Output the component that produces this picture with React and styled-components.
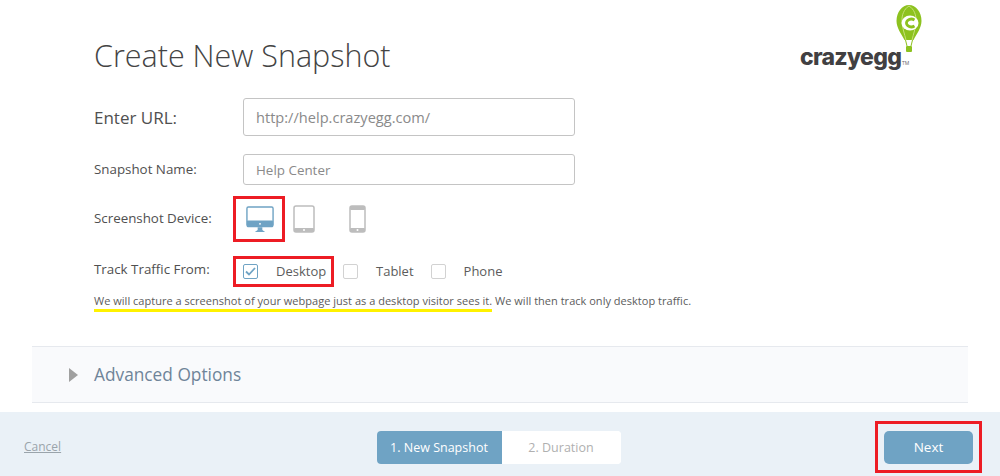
import React from "react";
import styled, { createGlobalStyle } from "styled-components";

const Global = createGlobalStyle`
  html, body { margin: 0; padding: 0; background: #fff; }
  body { font-family: "Open Sans", "Liberation Sans", sans-serif; color: #555; }
`;
const Page = styled.div`
  width: 1000px; height: 476px; overflow: hidden; display: flex; flex-direction: column;
`;
const Main = styled.div`
  height: 346px; padding: 0 78px 0 94px; box-sizing: border-box; display: flex; flex-direction: column;
`;
const Header = styled.header`
  height: 98px; display: flex; justify-content: space-between; align-items: flex-start;
`;
const Title = styled.h1`
  margin: 35px 0 0; font-size: 30.5px; line-height: 40px; font-weight: 300; color: #444;
`;
const Logo = styled.div`
  width: 122px; position: relative; height: 70px; margin-top: 2px; flex: none;
`;
const LogoWord = styled.span`
  position: absolute; left: 0; top: 41px; font-family: "Inter", "Liberation Sans", sans-serif; font-weight: 800; font-size: 23px; line-height: 28px; letter-spacing: -0.7px; color: #414042;
`;
const LogoMark = styled.span`
  position: absolute; left: 102px; top: 58px; font-size: 5px; line-height: 6px; color: #666;
`;
const Balloon = styled.svg`
  position: absolute; left: 95px; top: 2px;
`;
const Row = styled.div`
  display: flex; align-items: center; height: ${p => p.$h}px; margin-bottom: ${p => p.$mb || 0}px;
`;
const Label = styled.label`
  width: 149px; flex: none; font-size: ${p => p.$big ? 17 : 13.35}px; color: #505050; margin-bottom: ${p => p.$up || 0}px;
`;
const Input = styled.input`
  width: 332px; height: 100%; box-sizing: border-box; border: 1px solid #c4c4c4; border-radius: 3px; padding: 0 12px;
  font-family: inherit; font-size: ${p => p.$big ? 14.6 : 13.4}px; color: #8a8a8a; background: #fff; outline: none;
`;
const RedBox = styled.div`
  box-sizing: border-box; border: 3px solid #ed1c24; display: flex; align-items: center;
`;
const DeviceRow = styled.div`
  display: flex; align-items: center; margin-left: -10px;
`;
const DeviceBox = styled(RedBox)`
  width: 52px; height: 46px; justify-content: center; padding-left: 2px;
`;
const DeviceIcon = styled.svg`
  display: block; margin-left: ${p => p.$ml}px;
`;
const TrackBox = styled(RedBox)`
  width: 101px; height: 31px; padding-left: 7px; margin-left: -10px;
`;
const Check = styled.span`
  width: 15px; height: 15px; flex: none; box-sizing: border-box; border: 1.5px solid ${p => p.$on ? "#6fa3c4" : "#d2d2d2"}; border-radius: 2px; background: #fff;
  display: flex; align-items: center; justify-content: center;
`;
const CheckText = styled.span`
  font-size: 13px; color: #5c5c5c; margin-left: ${p => p.$ml}px; margin-bottom: 2px;
`;
const Plain = styled.div`
  display: flex; align-items: center; margin-left: ${p => p.$ml}px;
`;
const Note = styled.p`
  margin: 5px 0 0; font-size: 11px; line-height: 17px; color: #5c5c5c; white-space: nowrap; letter-spacing: 0.02px;
`;
const Marked = styled.span`
  display: inline-block; line-height: 16px; border-bottom: 3px solid #fff200;
`;
const Advanced = styled.div`
  margin: 0 32px; height: 57px; box-sizing: border-box; background: #f9fafc; border-top: 1px solid #e6e9ee; border-bottom: 1px solid #e6e9ee;
  display: flex; align-items: center; padding: 0 0 0 37px;
`;
const Arrow = styled.span`
  width: 0; height: 0; border-left: 9px solid #a0a0a0; border-top: 7px solid transparent; border-bottom: 7px solid transparent;
`;
const AdvText = styled.span`
  margin: 0 0 1px 16px; font-size: 17.3px; color: #6f8499;
`;
const Footer = styled.footer`
  margin-top: 9px; height: 64px; background: #eaf1f7; display: grid; grid-template-columns: 1fr auto 1fr; align-items: center;
  padding: 0 18px 0 24px; box-sizing: border-box;
`;
const Cancel = styled.a`
  font-size: 12px; color: #9aa4ab; text-decoration: underline; margin-top: 5px; justify-self: start;
`;
const Steps = styled.div`
  display: flex; height: 33px; width: 244px; border-radius: 4px; overflow: hidden; background: #fff; margin: 7px 9px 0 0;
`;
const Step = styled.div`
  flex: ${p => p.$w}px 0 0; display: flex; align-items: center; justify-content: center; font-size: 12.5px;
  background: ${p => p.$on ? "#6fa3c4" : "#fff"}; color: ${p => p.$on ? "#fff" : "#b0b0b0"};
`;
const NextBox = styled(RedBox)`
  width: 107px; height: 52px; justify-content: center; margin-top: 6px; justify-self: end;
`;
const Next = styled.button`
  width: 89px; height: 33px; border: 0; border-radius: 5px; background: #6fa3c4; color: #fff; font-family: inherit; font-size: 13.5px; font-weight: 400;
`;

export default function App() {
  return (
    <Page>
      <Global />
      <Main>
        <Header>
          <Title>Create New Snapshot</Title>
          <Logo>
            <LogoWord>crazyegg</LogoWord>
            <LogoMark>TM</LogoMark>
            <Balloon width="28" height="50" viewBox="0 0 28 50">
              <path d="M14 1C7 1 1.500 8 1.500 17c0 7 5 13 8 19h9c3-6 8-12 8-19C26.500 8 21 1 14 1z" fill="#8dc21f" />
              <path d="M14 2C9 5 6.500 11 7 18c.4 6 2.500 12 4 18M14 2c5 3 7.500 9 7 16-.4 6-2.500 12-4 18" stroke="#c5e07a" strokeWidth="1" fill="none" />
              <ellipse cx="15" cy="19" rx="8.500" ry="7.500" fill="#fff" />
              <path d="M19.500 16a5 3.800 0 1 0 0 6" stroke="#8dc21f" strokeWidth="2.800" fill="none" />
              <path d="M10.500 36l1.500 6M17.500 36l-1.500 6" stroke="#8dc21f" strokeWidth="1" />
              <rect x="11" y="42" width="6" height="6" rx="1" fill="#8dc21f" />
            </Balloon>
          </Logo>
        </Header>
        <Row $h={38} $mb={18}>
          <Label $big>Enter URL:</Label>
          <Input $big defaultValue="http://help.crazyegg.com/" />
        </Row>
        <Row $h={31} $mb={11}>
          <Label $up={2}>Snapshot Name:</Label>
          <Input defaultValue="Help Center" />
        </Row>
        <Row $h={46} $mb={14}>
          <Label $up={2}>Screenshot Device:</Label>
          <DeviceRow>
            <DeviceBox>
              <svg width="28" height="27" viewBox="0 0 30 28" preserveAspectRatio="none">
                <rect x="1" y="1" width="28" height="20" rx="1.500" fill="#fff" stroke="#6fa3c4" strokeWidth="1.500" />
                <rect x="1" y="15" width="28" height="7" rx="1" fill="#6fa3c4" />
                <circle cx="15" cy="18.500" r="1" fill="#fff" />
                <path d="M12.500 22h5v3l3 2h-11l3-2z" fill="#6fa3c4" />
              </svg>
            </DeviceBox>
            <DeviceIcon $ml={8} width="22" height="28" viewBox="0 0 22 28">
              <rect x="1" y="1" width="20" height="26" rx="2" fill="#fff" stroke="#bdbdbd" strokeWidth="1.500" />
              <rect x="1" y="23" width="20" height="4" rx="1" fill="#bdbdbd" />
              <circle cx="11" cy="25" r="1" fill="#fff" />
            </DeviceIcon>
            <DeviceIcon $ml={34} width="17" height="28" viewBox="0 0 17 28">
              <rect x="1" y="1" width="15" height="26" rx="2" fill="#fff" stroke="#bdbdbd" strokeWidth="1.500" />
              <rect x="1" y="1" width="15" height="4" rx="1" fill="#bdbdbd" />
              <rect x="1" y="23" width="15" height="4" rx="1" fill="#bdbdbd" />
              <circle cx="8.500" cy="25" r="1" fill="#fff" />
            </DeviceIcon>
          </DeviceRow>
        </Row>
        <Row $h={31}>
          <Label $up={6}>Track Traffic From:</Label>
          <TrackBox>
            <Check $on>
              <svg width="11" height="9" viewBox="0 0 11 9"><path d="M1 4.500L4 7.500 10 1" stroke="#6fa3c4" strokeWidth="1.800" fill="none" /></svg>
            </Check>
            <CheckText $ml={18}>Desktop</CheckText>
          </TrackBox>
          <Plain $ml={9}><Check /><CheckText $ml={18}>Tablet</CheckText></Plain>
          <Plain $ml={17}><Check /><CheckText $ml={18}>Phone</CheckText></Plain>
        </Row>
        <Note>
          <Marked>We will capture a screenshot of your webpage just as a desktop visitor sees it.</Marked> We will then track only desktop traffic.
        </Note>
      </Main>
      <Advanced>
        <Arrow />
        <AdvText>Advanced Options</AdvText>
      </Advanced>
      <Footer>
        <Cancel>Cancel</Cancel>
        <Steps>
          <Step $on $w={125}>1. New Snapshot</Step>
          <Step $w={119}>2. Duration</Step>
        </Steps>
        <NextBox><Next>Next</Next></NextBox>
      </Footer>
    </Page>
  );
}
